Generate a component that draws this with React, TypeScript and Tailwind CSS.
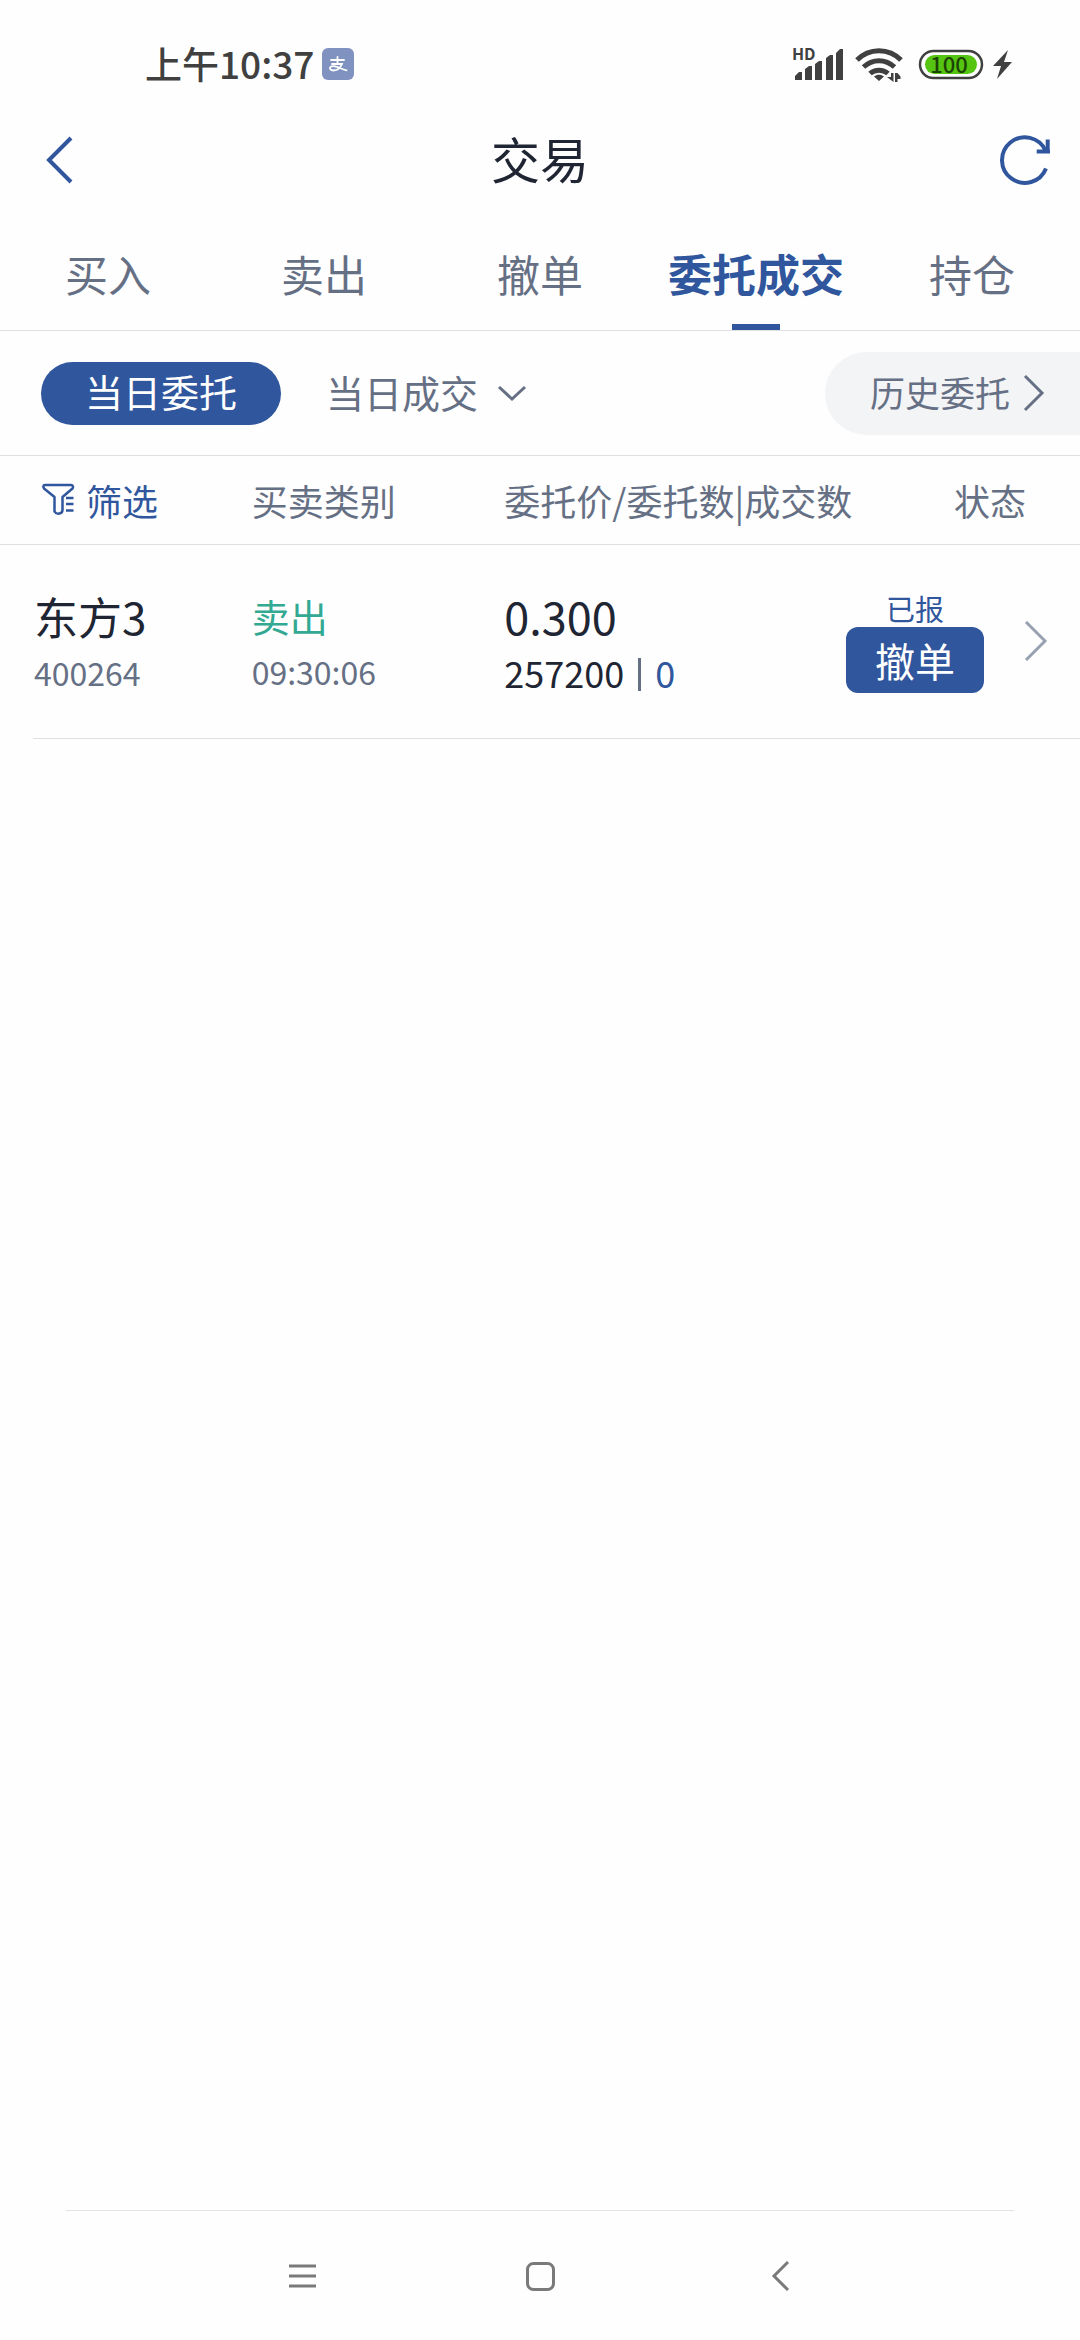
import { useState } from 'react'

const TABS = ['买入', '卖出', '撤单', '委托成交', '持仓']

const ORDERS = [
  {
    name: '东方3',
    code: '400264',
    side: '卖出',
    time: '09:30:06',
    price: '0.300',
    amount: '257200',
    filled: '0',
    status: '已报',
  },
]

function StatusBar() {
  return (
    <div className="flex h-32 items-center justify-between pr-[68px] pl-[145px] text-[#404040]">
      <div className="flex items-center gap-2 text-[37px] leading-[48px] font-medium">
        <span className="pb-0.5">上午10:37</span>
        <span className="flex size-8 items-center justify-center rounded-md bg-[#8092c0]">
          <svg viewBox="0 0 32 32" className="size-8" fill="none" stroke="#fff" strokeWidth="1.800" strokeLinecap="round">
            <path d="M9 12h13M15.500 9v7M10 16h10c-1.500 3.500-4.500 6.500-8.500 6.500-3 0-4-1.700-3.300-3.200 1-1.500 3.800-1.500 6.800-.4 3 1.100 6 2.600 9.500 3.400" />
          </svg>
        </span>
      </div>
      <svg viewBox="0 -8 220 56" className="h-14 w-[220px]" fill="#404040">
        <text x="0" y="16" fontSize="16" fontWeight="700">HD</text>
        <path d="M3 36v-4l4-4h3v8zM13 36V25l4-3h3v14zM23 36V20l4-3h3v19zM34 36V14l4-3h3v25zM44 36V9l4-4h3v31z" />
        <g fill="none" stroke="#404040" strokeWidth="5">
          <path d="M65 16c12-12.500 32-12.500 44 0" />
          <path d="M71.500 23c9-8.500 22-8.500 31 0" />
          <path d="M78 29.500c5-4.500 13-4.500 18 0" />
        </g>
        <path d="M82 32.500c3-2.500 7-2.500 10 0L87 37zM95 33h4v-4h2.500v9zM103 38v-9h2.500l3 3.500V35h-3v3z" />
        <rect x="128" y="7" width="62" height="27" rx="13.500" fill="none" stroke="#404040" strokeWidth="2.500" />
        <rect x="133" y="11" width="52" height="19" rx="9.500" fill="#55c511" />
        <text x="157" y="28.500" fontSize="22" textAnchor="middle" fill="#1d4206" fontWeight="500">100</text>
        <path d="M216 6l-15 16h8l-4 13 15-17h-8z" />
      </svg>
    </div>
  )
}

function Chevron({ d, className, width }: { d: string; className: string; width: number }) {
  return (
    <svg viewBox="0 0 40 40" className={className} fill="none" stroke="currentColor" strokeWidth={width}>
      <path d={d} />
    </svg>
  )
}

export default function App() {
  const [tab, setTab] = useState('委托成交')

  return (
    <div className="flex min-h-screen flex-col bg-[#fefefe] font-['Noto_Sans_CJK_SC',sans-serif] text-[#202534]">
      <StatusBar />

      <header className="flex h-16 items-center justify-between px-[30px] text-[#30569d]">
        <button aria-label="返回" className="w-14">
          <svg viewBox="0 0 56 56" className="size-14" fill="none" stroke="currentColor" strokeWidth="4">
            <path d="M41 6L19 28l22 22" />
          </svg>
        </button>
        <h1 className="pb-1 text-[49px] leading-[60px] text-[#202534]">交易</h1>
        <button aria-label="刷新" className="w-14">
          <svg viewBox="0 0 56 56" className="size-14" fill="none" stroke="currentColor" strokeWidth="4">
            <path d="M52 36.500A22.800 22.800 0 1 1 51.500 18.500" />
            <path d="M42.700 19.500H56M53.700 7.500v13" />
          </svg>
        </button>
      </header>

      <nav className="mt-7 flex h-[111px] border-b border-[#e0e0e2]">
        {TABS.map(t => (
          <button
            key={t}
            onClick={() => setTab(t)}
            className={`relative flex-1 pb-1 whitespace-nowrap ${t === tab ? 'text-[44px] leading-[64px] font-bold text-[#30569d]' : 'text-[43px] leading-[64px] text-[#667085]'}`}
          >
            {t}
            {t === tab && <span className="absolute bottom-0 left-1/2 h-1.5 w-12 -translate-x-1/2 bg-[#30569d]" />}
          </button>
        ))}
      </nav>

      <div className="flex h-[125px] items-center border-b border-[#e0e0e2] pl-[41px] text-[38px] text-[#667085]">
        <button className="h-[63px] w-60 rounded-full bg-[#30569d] pb-1 leading-[58px] text-white">当日委托</button>
        <button className="ml-[45px] flex items-center gap-3.5">
          <span className="pb-1">当日成交</span>
          <Chevron d="M7 14l13 12 13-12" className="size-10" width={3} />
        </button>
        <button className="ml-auto flex h-[83px] items-center gap-1 rounded-l-full bg-[#f3f4f6] pr-[26px] pl-[45px] text-[35px]">
          <span className="pb-0.5">历史委托</span>
          <Chevron d="M11 3l17 17-17 17" className="size-10" width={3} />
        </button>
      </div>

      <table className="w-full table-fixed">
        <colgroup>
          <col className="w-[23.300%]" />
          <col className="w-[23.400%]" />
          <col className="w-[28.500%]" />
          <col />
        </colgroup>
        <thead>
          <tr className="h-[88px] border-b border-[#e0e0e2] text-left text-[36px] leading-[52px] text-[#667085]">
            <th className="pl-10 font-normal">
              <button className="flex items-center gap-2.5 text-[#30569d]">
                <svg viewBox="0 0 36 36" className="size-9" fill="none" stroke="currentColor" strokeWidth="2.500" strokeLinejoin="round">
                  <path d="M5 3h26c2 0 2.500 2 1.500 3.500L22.500 15v13c0 4-6 5-8 1.500V15L4 6.500C3 5 3 3 5 3z" />
                  <path d="M26 16h7.500M26 22h7.500M26 28.500h7.500" />
                </svg>
                筛选
              </button>
            </th>
            <th className="font-normal">买卖类别</th>
            <th className="font-normal whitespace-nowrap">委托价/委托数|成交数</th>
            <th className="pr-[54px] text-right font-normal">状态</th>
          </tr>
        </thead>
        <tbody>
          {ORDERS.map(o => (
            <tr key={o.time} className="h-[194px]">
              <td className="pl-[34px]">
                <div className="text-[44px] leading-[62px]">{o.name}</div>
                <div className="text-[32px] leading-[50px] text-[#667085]">{o.code}</div>
              </td>
              <td>
                <div className="text-[38px] leading-[60px] text-[#33a993]">{o.side}</div>
                <div className="text-[32px] leading-[50px] text-[#667085]">{o.time}</div>
              </td>
              <td>
                <div className="text-[45px] leading-[62px]">{o.price}</div>
                <div className="flex items-center gap-3.5 text-[36px] leading-[50px]">
                  {o.amount}
                  <span className="mb-1.5 h-[33px] w-[3px] self-end bg-[#667085]" />
                  <span className="text-[#30569d]">{o.filled}</span>
                </div>
              </td>
              <td>
                <div className="flex items-center justify-end gap-8 pr-6">
                  <div className="flex flex-col items-center">
                    <span className="text-[29px] leading-[38px] text-[#30569d]">{o.status}</span>
                    <button className="h-[66px] w-[138px] rounded-xl bg-[#30569d] text-[40px] leading-[60px] text-white">撤单</button>
                  </div>
                  <button aria-label="详情" className="text-[#98a1b0]">
                    <Chevron d="M10 1l19 19-19 19" className="size-10" width={3} />
                  </button>
                </div>
              </td>
            </tr>
          ))}
        </tbody>
      </table>
      <div className="ml-[33px] border-b border-[#e0e0e2]" />

      <footer className="mt-auto">
        <div className="mx-[66px] border-b border-[#e4e4e4]" />
        <div className="flex h-[129px] justify-center text-[#7a7a7a]">
          <button aria-label="任务" className="flex w-[22%] items-center justify-center">
            <svg viewBox="0 0 40 40" className="size-10" fill="none" stroke="currentColor" strokeWidth="3">
              <path d="M7 10h27M7 20h27M7 30h27" />
            </svg>
          </button>
          <button aria-label="主页" className="flex w-[22%] items-center justify-center">
            <svg viewBox="0 0 40 40" className="size-10" fill="none" stroke="currentColor" strokeWidth="3">
              <rect x="7.500" y="7.500" width="26" height="26" rx="6" />
            </svg>
          </button>
          <button aria-label="后退" className="flex w-[22%] items-center justify-center">
            <svg viewBox="0 0 40 40" className="size-10" fill="none" stroke="currentColor" strokeWidth="3">
              <path d="M30 6L16 20l14 14" />
            </svg>
          </button>
        </div>
      </footer>
    </div>
  )
}
